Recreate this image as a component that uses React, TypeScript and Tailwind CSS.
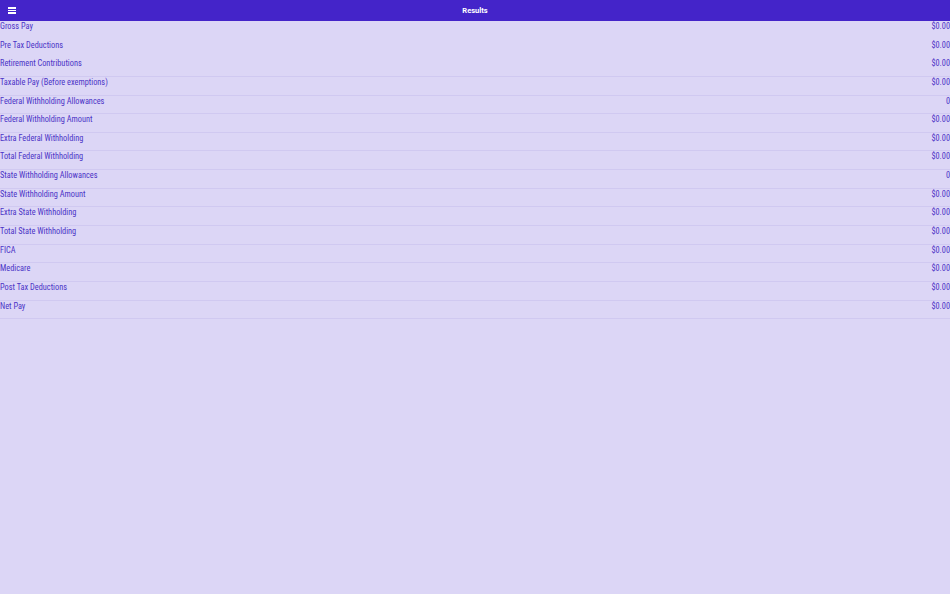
const rows: { label: string; value: string }[] = [
  { label: "Gross Pay", value: "$0.00" },
  { label: "Pre Tax Deductions", value: "$0.00" },
  { label: "Retirement Contributions", value: "$0.00" },
  { label: "Taxable Pay (Before exemptions)", value: "$0.00" },
  { label: "Federal Withholding Allowances", value: "0" },
  { label: "Federal Withholding Amount", value: "$0.00" },
  { label: "Extra Federal Withholding", value: "$0.00" },
  { label: "Total Federal Withholding", value: "$0.00" },
  { label: "State Withholding Allowances", value: "0" },
  { label: "State Withholding Amount", value: "$0.00" },
  { label: "Extra State Withholding", value: "$0.00" },
  { label: "Total State Withholding", value: "$0.00" },
  { label: "FICA", value: "$0.00" },
  { label: "Medicare", value: "$0.00" },
  { label: "Post Tax Deductions", value: "$0.00" },
  { label: "Net Pay", value: "$0.00" },
];

export default function App() {
  return (
    <div className="h-[594px] w-[950px] bg-[#dcd6f6] font-['Roboto',sans-serif] text-[#4b33c6] flex flex-col">
      <header className="relative h-[21px] bg-[#4424c9] flex items-center justify-center shrink-0">
        <button className="absolute left-[8px] top-[7px] flex flex-col gap-[1px]">
          <span className="block w-[8px] h-[1.5px] bg-white" />
          <span className="block w-[8px] h-[1.5px] bg-white" />
          <span className="block w-[8px] h-[1.5px] bg-white" />
        </button>
        <h1 className="text-[7.5px] font-bold text-white leading-none">Results</h1>
      </header>

      <div className="flex flex-col">
        {rows.map((r, i) => (
          <div
            key={r.label}
            className={
              i < 2
                ? "h-[18.65px] flex justify-between text-[8.3px] [font-stretch:87%] leading-[11px]"
                : "h-[18.65px] flex justify-between text-[8.3px] [font-stretch:87%] leading-[11px] border-b border-[#d0c9f1]"
            }
          >
            <span>{r.label}</span>
            <span>{r.value}</span>
          </div>
        ))}
      </div>
    </div>
  );
}
